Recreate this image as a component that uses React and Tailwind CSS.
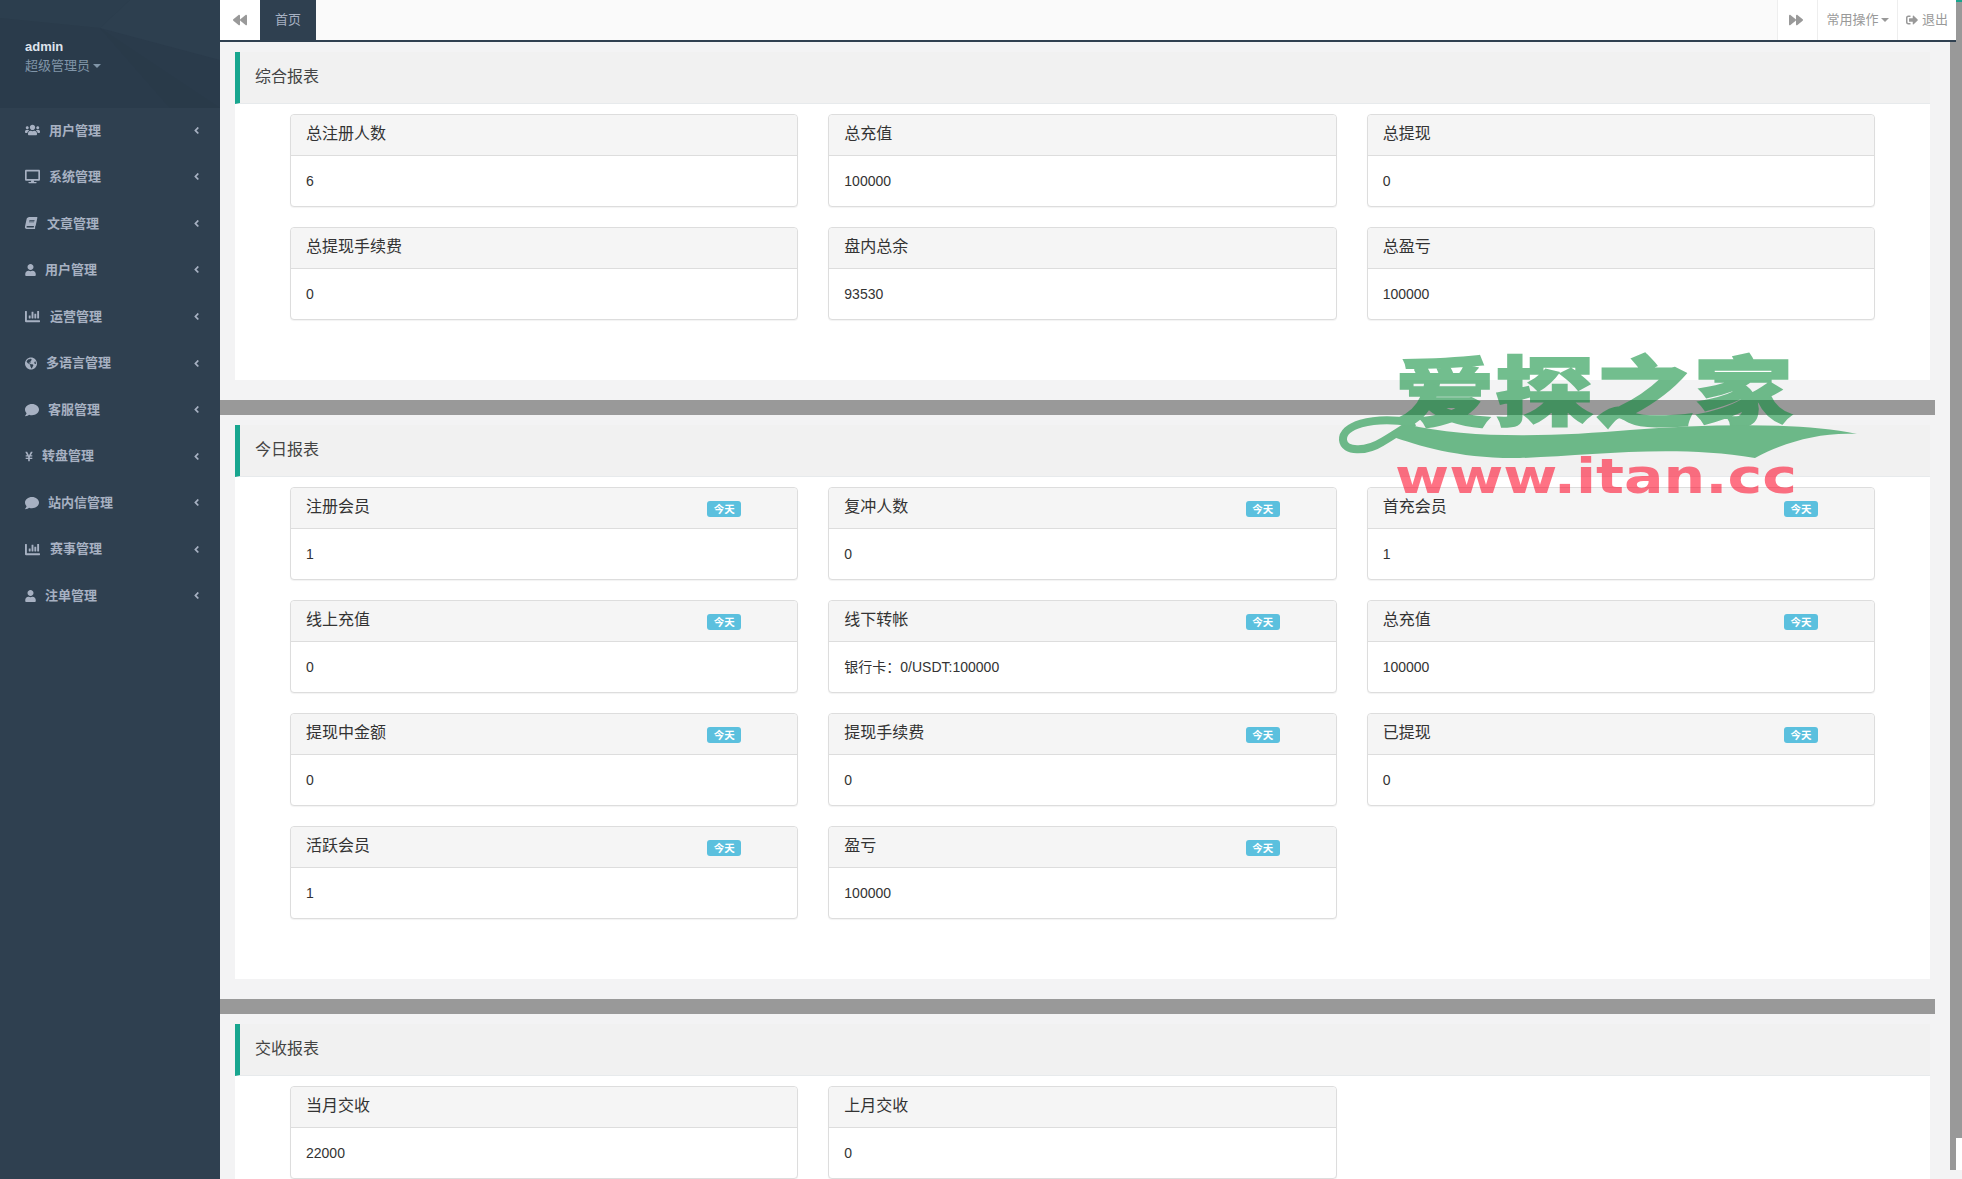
import {
  FaUsers,
  FaDesktop,
  FaBook,
  FaUser,
  FaChartBar,
  FaGlobeAmericas,
  FaComment,
  FaYenSign,
  FaAngleLeft,
  FaBackward,
  FaForward,
  FaSignOutAlt,
} from 'react-icons/fa';

const menu = [
  { icon: FaUsers, label: '用户管理', box: 'w-[15px]', cls: 'text-[16px]' },
  { icon: FaDesktop, label: '系统管理', box: 'w-[15px]', cls: 'text-[15px]' },
  { icon: FaBook, label: '文章管理', box: 'w-[13px]', cls: 'text-[12px] -skew-x-12' },
  { icon: FaUser, label: '用户管理', box: 'w-[11px]', cls: 'text-[12px]' },
  { icon: FaChartBar, label: '运营管理', box: 'w-[16px]', cls: 'text-[15px]' },
  { icon: FaGlobeAmericas, label: '多语言管理', box: 'w-[12px]', cls: 'text-[13px]' },
  { icon: FaComment, label: '客服管理', box: 'w-[14px]', cls: 'text-[14px]' },
  { icon: FaYenSign, label: '转盘管理', box: 'w-[8px]', cls: 'text-[13px]' },
  { icon: FaComment, label: '站内信管理', box: 'w-[14px]', cls: 'text-[14px]' },
  { icon: FaChartBar, label: '赛事管理', box: 'w-[16px]', cls: 'text-[15px]' },
  { icon: FaUser, label: '注单管理', box: 'w-[11px]', cls: 'text-[12px]' },
];

const sections = [
  {
    title: '综合报表',
    cards: [
      { title: '总注册人数', value: '6' },
      { title: '总充值', value: '100000' },
      { title: '总提现', value: '0' },
      { title: '总提现手续费', value: '0' },
      { title: '盘内总余', value: '93530' },
      { title: '总盈亏', value: '100000' },
    ],
  },
  {
    title: '今日报表',
    cards: [
      { title: '注册会员', value: '1', today: true },
      { title: '复冲人数', value: '0', today: true },
      { title: '首充会员', value: '1', today: true },
      { title: '线上充值', value: '0', today: true },
      { title: '线下转帐', value: '银行卡：0/USDT:100000', today: true },
      { title: '总充值', value: '100000', today: true },
      { title: '提现中金额', value: '0', today: true },
      { title: '提现手续费', value: '0', today: true },
      { title: '已提现', value: '0', today: true },
      { title: '活跃会员', value: '1', today: true },
      { title: '盈亏', value: '100000', today: true },
    ],
  },
  {
    title: '交收报表',
    cards: [
      { title: '当月交收', value: '22000' },
      { title: '上月交收', value: '0' },
    ],
  },
];

function Sidebar() {
  return (
    <aside className="w-[220px] shrink-0 bg-[#2f4050] text-[13px] font-semibold text-[#a7b1c2]">
      <div className="relative h-[108px] overflow-hidden bg-[#2a3b4b] pl-[25px] pt-[37px]">
        <svg className="absolute inset-0" width="220" height="108" viewBox="0 0 220 108">
          <polygon points="0,0 130,0 100,28 0,18" fill="#2c3e4e" />
          <polygon points="100,28 220,108 170,108" fill="#293a49" />
          <polygon points="130,0 220,0 220,60 100,28" fill="#2d3f4f" />
        </svg>
        <div className="relative leading-[20px] text-[#dfe4ed]">admin</div>
        <div className="relative flex items-center gap-[3px] font-normal leading-[18px] text-[#8095a8]">
          超级管理员
          <span className="h-0 w-0 border-x-[4px] border-t-[4px] border-x-transparent border-t-[#8095a8]" />
        </div>
      </div>
      <nav className="-mt-[1px]">
        {menu.map((item, i) => {
          const Icon = item.icon;
          return (
            <div key={i} className="flex h-[46.55px] items-center pl-[25px] pr-[18px]">
              <span className={`${item.box} flex shrink-0 justify-start`}>
                <Icon className={item.cls} />
              </span>
              <span className="ml-[9px]">{item.label}</span>
              <FaAngleLeft className="ml-auto text-[11px]" />
            </div>
          );
        })}
      </nav>
    </aside>
  );
}

function TopBar() {
  return (
    <header className="relative z-10 mr-[6px] flex h-[42px] shrink-0 border-b-2 border-[#2f4050] bg-[#fafafa] text-[13px] text-[#999]">
      <div className="flex w-[40px] items-center justify-center bg-white">
        <FaBackward className="text-[14px]" />
      </div>
      <div className="flex w-[56px] items-center justify-center bg-[#2f4050] text-[#a7b1c2]">首页</div>
      <div className="ml-auto flex w-[40px] items-center justify-center border-l border-[#eee] bg-white pr-[3px]">
        <FaForward className="text-[14px]" />
      </div>
      <div className="flex w-[80px] items-center justify-center gap-[2px] border-l border-[#eee] bg-white">
        常用操作
        <span className="h-0 w-0 border-x-[4px] border-t-[4px] border-x-transparent border-t-[#999]" />
      </div>
      <div className="flex w-[59px] items-center justify-center gap-[4px] border-l border-[#eee] bg-white">
        <FaSignOutAlt className="text-[12px]" />
        退出
      </div>
    </header>
  );
}

function Card({ card }) {
  return (
    <div className="rounded-[4px] border border-[#ddd] bg-white shadow-[0_1px_1px_rgba(0,0,0,0.05)]">
      <div className="flex h-[41px] items-start rounded-t-[4px] border-b border-[#ddd] bg-[#f5f5f5] pl-[15px] pr-[56px] pt-[8px] text-[16px] leading-[22px] text-[#333]">
        {card.title}
        {card.today && (
          <span className="ml-auto mt-[5px] flex h-[16px] w-[34px] items-center justify-center rounded-[3px] bg-[#5bc0de] text-[10.5px] font-bold text-white">
            今天
          </span>
        )}
      </div>
      <div className="h-[50px] px-[15px] pt-[15px] text-[14px] leading-[20px] text-[#333]">{card.value}</div>
    </div>
  );
}

function Section({ section }) {
  return (
    <section className="mb-[20px] ml-[15px] mr-[20px] bg-white">
      <div className="flex h-[52px] items-center border-b border-[#e7eaec] border-l-[5px] border-l-[#18a68f] bg-[#f1f1f1] pb-[2px] pl-[15px] text-[16px] text-[#444]">
        {section.title}
      </div>
      <div className="grid grid-cols-3 gap-x-[30px] gap-y-[20px] px-[55px] pb-[60px] pt-[10px]">
        {section.cards.map((card, i) => (
          <Card key={i} card={card} />
        ))}
      </div>
    </section>
  );
}

function Watermark() {
  return (
    <svg className="pointer-events-none absolute left-[1330px] top-[290px] z-20" width="540" height="220" viewBox="0 -50 540 220">
      <g opacity="0.55" fill="#008a33">
        <text
          transform="translate(65 80) scale(1 0.8)"
          fontFamily="'Noto Sans CJK SC', sans-serif"
          fontWeight="900"
          fontSize="95"
          textLength="398"
          lengthAdjust="spacingAndGlyphs"
          stroke="#008a33"
          strokeWidth="2"
        >
          爱探之家
        </text>
        <path d="M80 82 C40 76 12 86 13 100 C14 112 36 112 52 102 C64 95 74 88 84 82" fill="none" stroke="#008a33" strokeWidth="8" />
        <path d="M76 84 C140 100 230 96 300 90 C380 84 470 82 527 94 C490 92 455 102 425 118 C340 104 260 116 190 118 C130 119 90 106 60 96 Z" />
      </g>
      <text
        x="65"
        y="153"
        fontFamily="'DejaVu Sans', sans-serif"
        fontWeight="700"
        fontSize="48"
        textLength="402"
        lengthAdjust="spacingAndGlyphs"
        fill="#ff0021"
        opacity="0.55"
      >
        www.itan.cc
      </text>
    </svg>
  );
}

export default function App() {
  return (
    <div className="relative flex h-screen overflow-hidden bg-[#f3f3f4] font-['Liberation_Sans','Noto_Sans_CJK_SC',sans-serif]">
      <Sidebar />
      <main className="flex min-w-0 flex-1 flex-col">
        <TopBar />
        <div className="mr-[12px] flex-1 overflow-hidden pt-[10px]">
          {sections.map((section, i) => (
            <div key={i}>
              {i > 0 && <hr className="mb-[10px] mr-[15px] h-[15px] border-0 bg-[#999]" />}
              <Section section={section} />
            </div>
          ))}
        </div>
      </main>
      {/* fake scrollbar from the capture */}
      <div className="absolute right-0 top-0 flex h-[1170px] w-[12px] justify-end bg-[#999]">
        <div className="flex w-[6px] flex-col justify-between">
          <div className="h-[2px] bg-[#18a68f]" />
          <div className="h-[32px] bg-white" />
        </div>
      </div>
      <Watermark />
    </div>
  );
}
